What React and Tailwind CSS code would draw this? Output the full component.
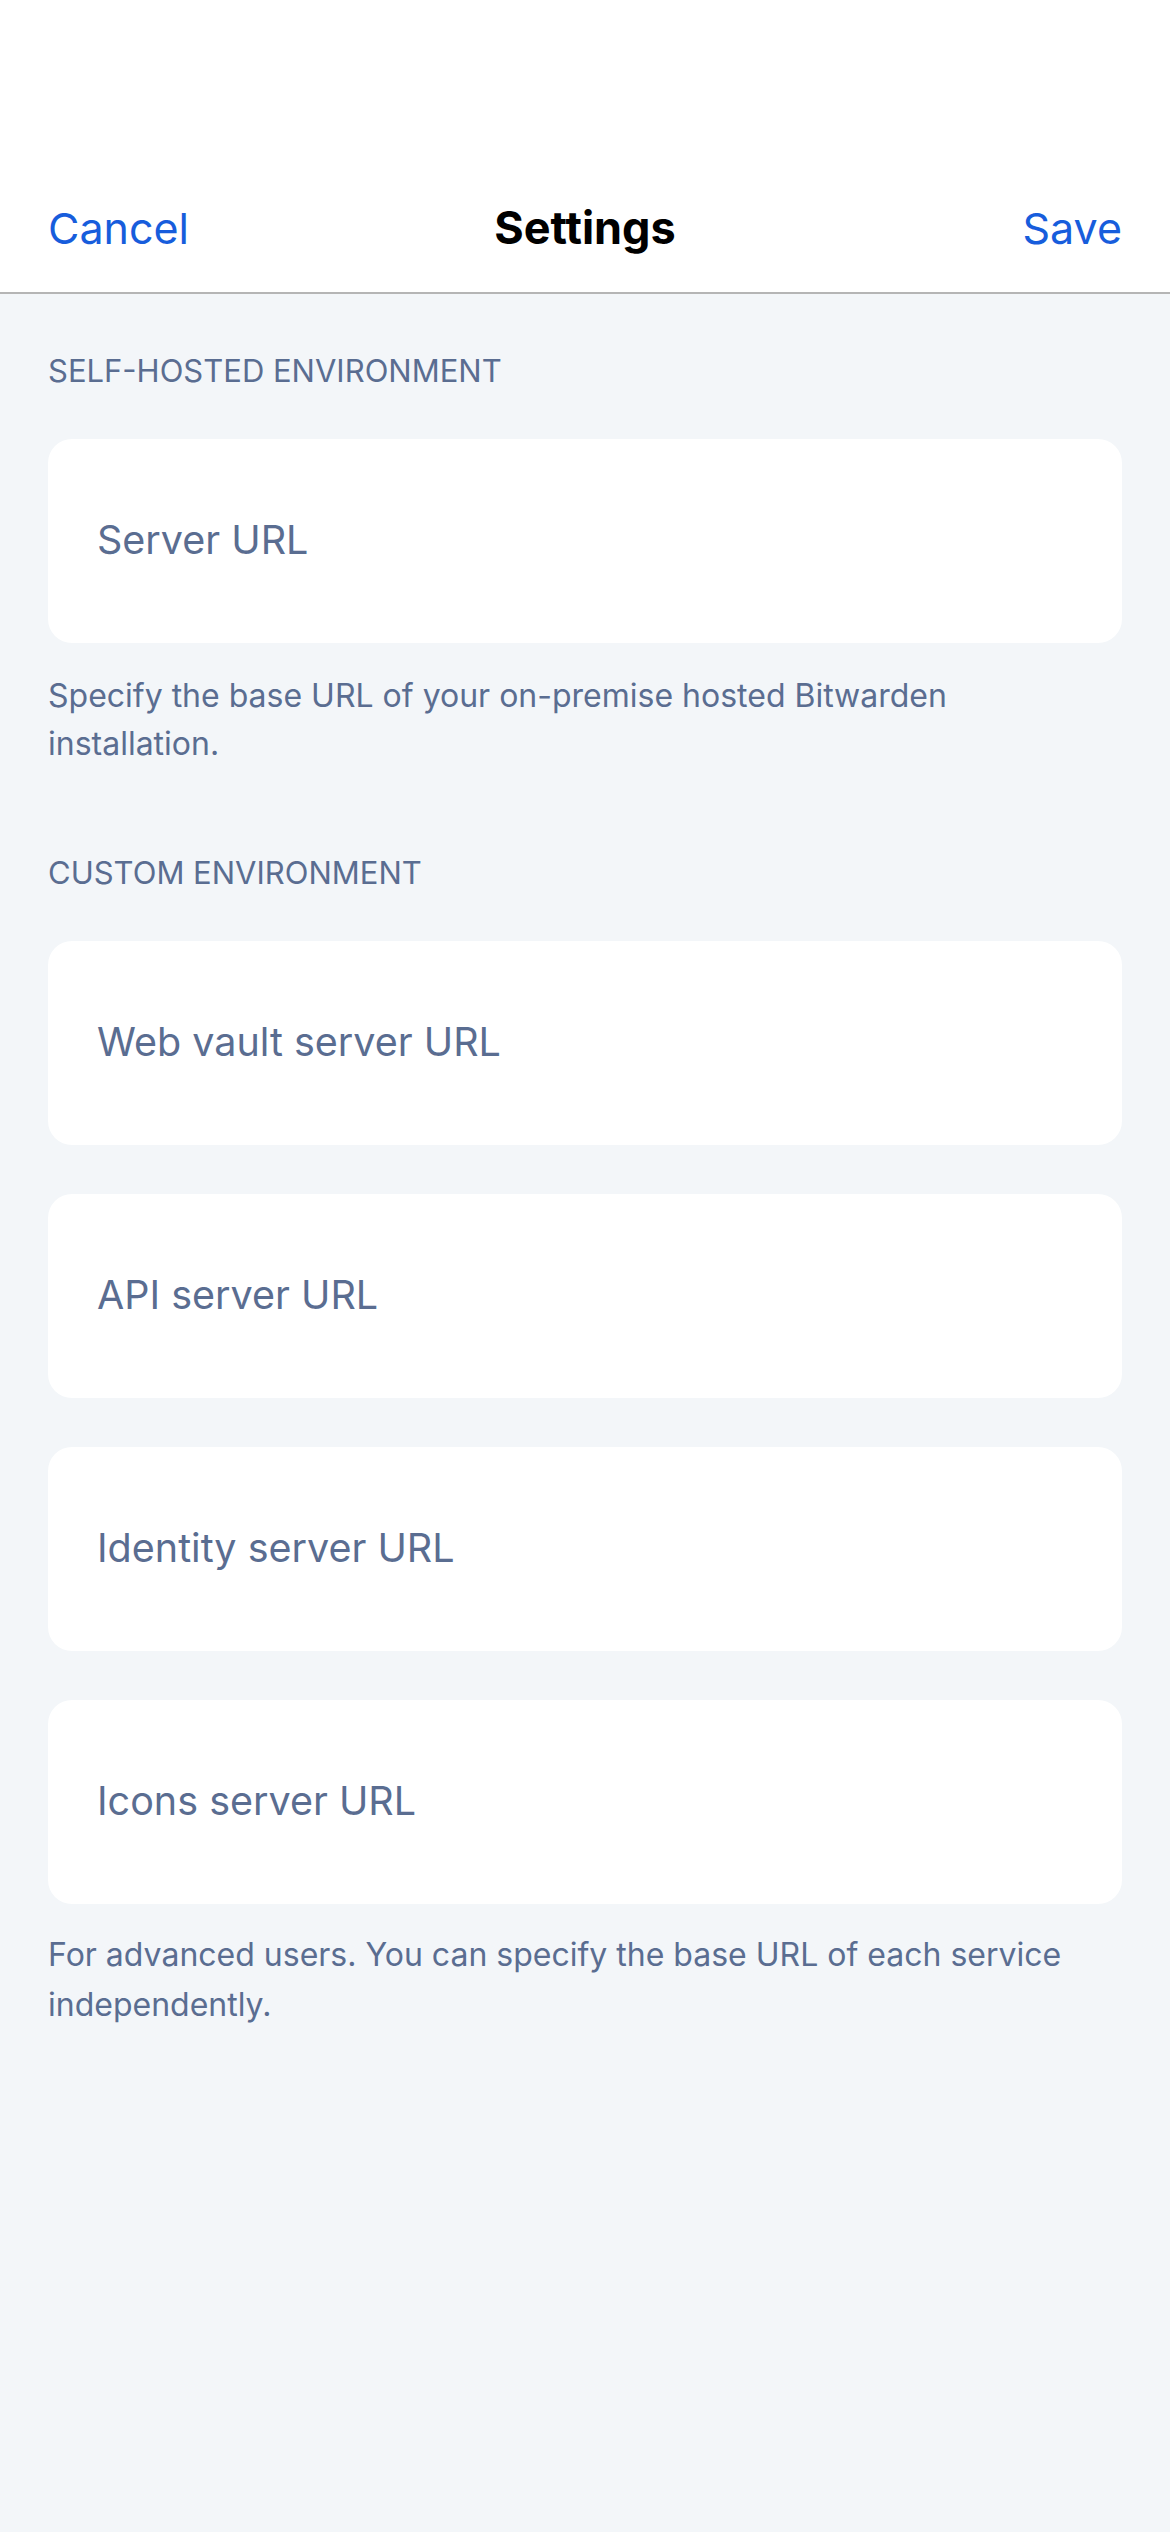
export default function App() {
  const custom = ["Web vault server URL", "API server URL", "Identity server URL", "Icons server URL"];

  return (
    <div className="min-h-[2532px] bg-[#f3f6f9] font-['Inter',sans-serif] text-[#5a6d91]">
      <header className="h-[294px] bg-white border-b-2 border-[#b5b5b5] px-[48px] pt-[200px]">
        <div className="grid grid-cols-3 items-center h-[56px]">
          <button className="justify-self-start text-[43px] leading-[56px] text-[#175ddc]">Cancel</button>
          <h1 className="text-center text-[45px] leading-[56px] font-bold text-black">Settings</h1>
          <button className="justify-self-end text-[43px] leading-[56px] text-[#175ddc]">Save</button>
        </div>
      </header>

      <main className="px-[48px]">
        <h2 className="mt-[57px] text-[31px] leading-[40px] uppercase">Self-hosted environment</h2>
        <div className="mt-[48px] h-[204px] rounded-[24px] bg-white flex items-center px-[49px]">
          <span className="text-[39.5px]">Server URL</span>
        </div>
        <p className="mt-[29px] text-[32px] leading-[48px]">
          Specify the base URL of your on-premise hosted Bitwarden installation.
        </p>

        <h2 className="mt-[85px] text-[31px] leading-[40px] uppercase">Custom environment</h2>
        <div className="mt-[48px] flex flex-col gap-[49px]">
          {custom.map((label) => (
            <div key={label} className="h-[204px] rounded-[24px] bg-white flex items-center px-[49px]">
              <span className="text-[39.5px]">{label}</span>
            </div>
          ))}
        </div>
        <p className="mt-[26px] text-[32px] leading-[50px]">
          For advanced users. You can specify the base URL of each service independently.
        </p>
      </main>
    </div>
  );
}
